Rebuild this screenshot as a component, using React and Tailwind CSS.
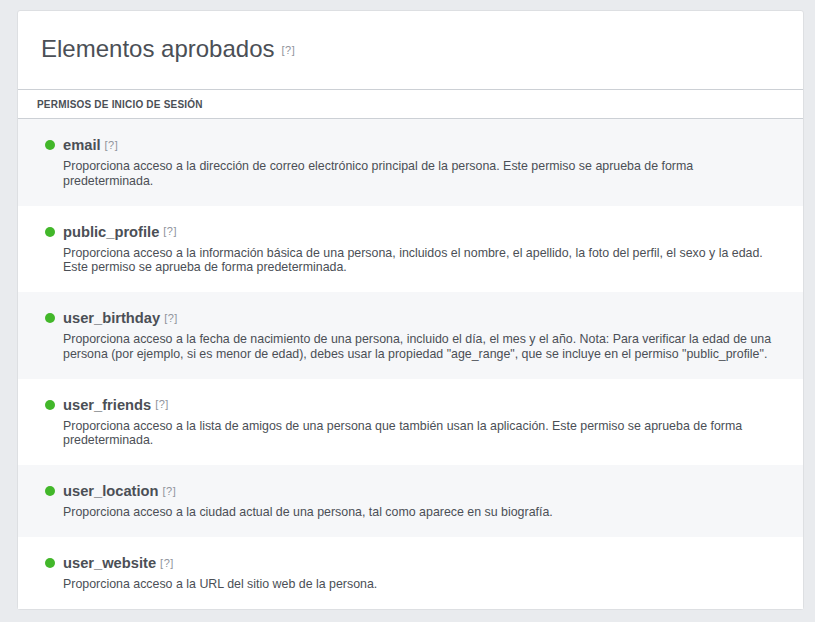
import React from "react";

const items = [
  {
    name: "email",
    desc: "Proporciona acceso a la dirección de correo electrónico principal de la persona. Este permiso se aprueba de forma predeterminada.",
  },
  {
    name: "public_profile",
    desc: "Proporciona acceso a la información básica de una persona, incluidos el nombre, el apellido, la foto del perfil, el sexo y la edad. Este permiso se aprueba de forma predeterminada.",
  },
  {
    name: "user_birthday",
    desc: 'Proporciona acceso a la fecha de nacimiento de una persona, incluido el día, el mes y el año. Nota: Para verificar la edad de una persona (por ejemplo, si es menor de edad), debes usar la propiedad "age_range", que se incluye en el permiso "public_profile".',
  },
  {
    name: "user_friends",
    desc: "Proporciona acceso a la lista de amigos de una persona que también usan la aplicación. Este permiso se aprueba de forma predeterminada.",
  },
  {
    name: "user_location",
    desc: "Proporciona acceso a la ciudad actual de una persona, tal como aparece en su biografía.",
  },
  {
    name: "user_website",
    desc: "Proporciona acceso a la URL del sitio web de la persona.",
  },
];

export default function App() {
  return (
    <div
      className="min-h-[622px] w-[815px] bg-[#e9ebee] pt-[10px] pl-[17px]"
      style={{ fontFamily: '"Liberation Sans", Arial, sans-serif' }}
    >
      <div className="w-[787px] bg-white border border-[#dddfe2] rounded-[3px] text-[#4b4f56]">
        <div className="pl-[23px] pt-[24px] pb-[26px] flex items-center">
          <h1 className="text-[24px] leading-[28px] text-[#4b4f56] font-normal">Elementos aprobados</h1>
          <span className="ml-[7px] text-[11px] tracking-[0.5px] text-[#90949c] mt-[2px]">[?]</span>
        </div>
        <div className="border-t border-b border-[#ccd0d5] h-[30px] flex items-center pl-[19px]">
          <span className="text-[10px] font-bold tracking-[0.2px] text-[#4b4f56]">PERMISOS DE INICIO DE SESIÓN</span>
        </div>
        <div>
          {items.map((it, i) => (
            <div
              key={it.name}
              className={
                (i % 2 === 0 ? "bg-[#f6f7f9]" : "bg-white") +
                " pt-[17px] pb-[17.5px] pl-[27px] flex"
              }
            >
              <div className="w-[10px] h-[10px] rounded-full bg-[#42b72a] mt-[4px] mr-[8px] shrink-0" />
              <div className="w-[722px]">
                <div className="flex items-center h-[18px]">
                  <span className="text-[14.7px] font-bold text-[#4b4f56] leading-[18px]">{it.name}</span>
                  <span className="ml-[4px] text-[11px] tracking-[0.5px] text-[#90949c]">[?]</span>
                </div>
                <p className="mt-[5px] text-[12.4px] leading-[14.5px] text-[#4b4f56]">{it.desc}</p>
              </div>
            </div>
          ))}
        </div>
      </div>
    </div>
  );
}
